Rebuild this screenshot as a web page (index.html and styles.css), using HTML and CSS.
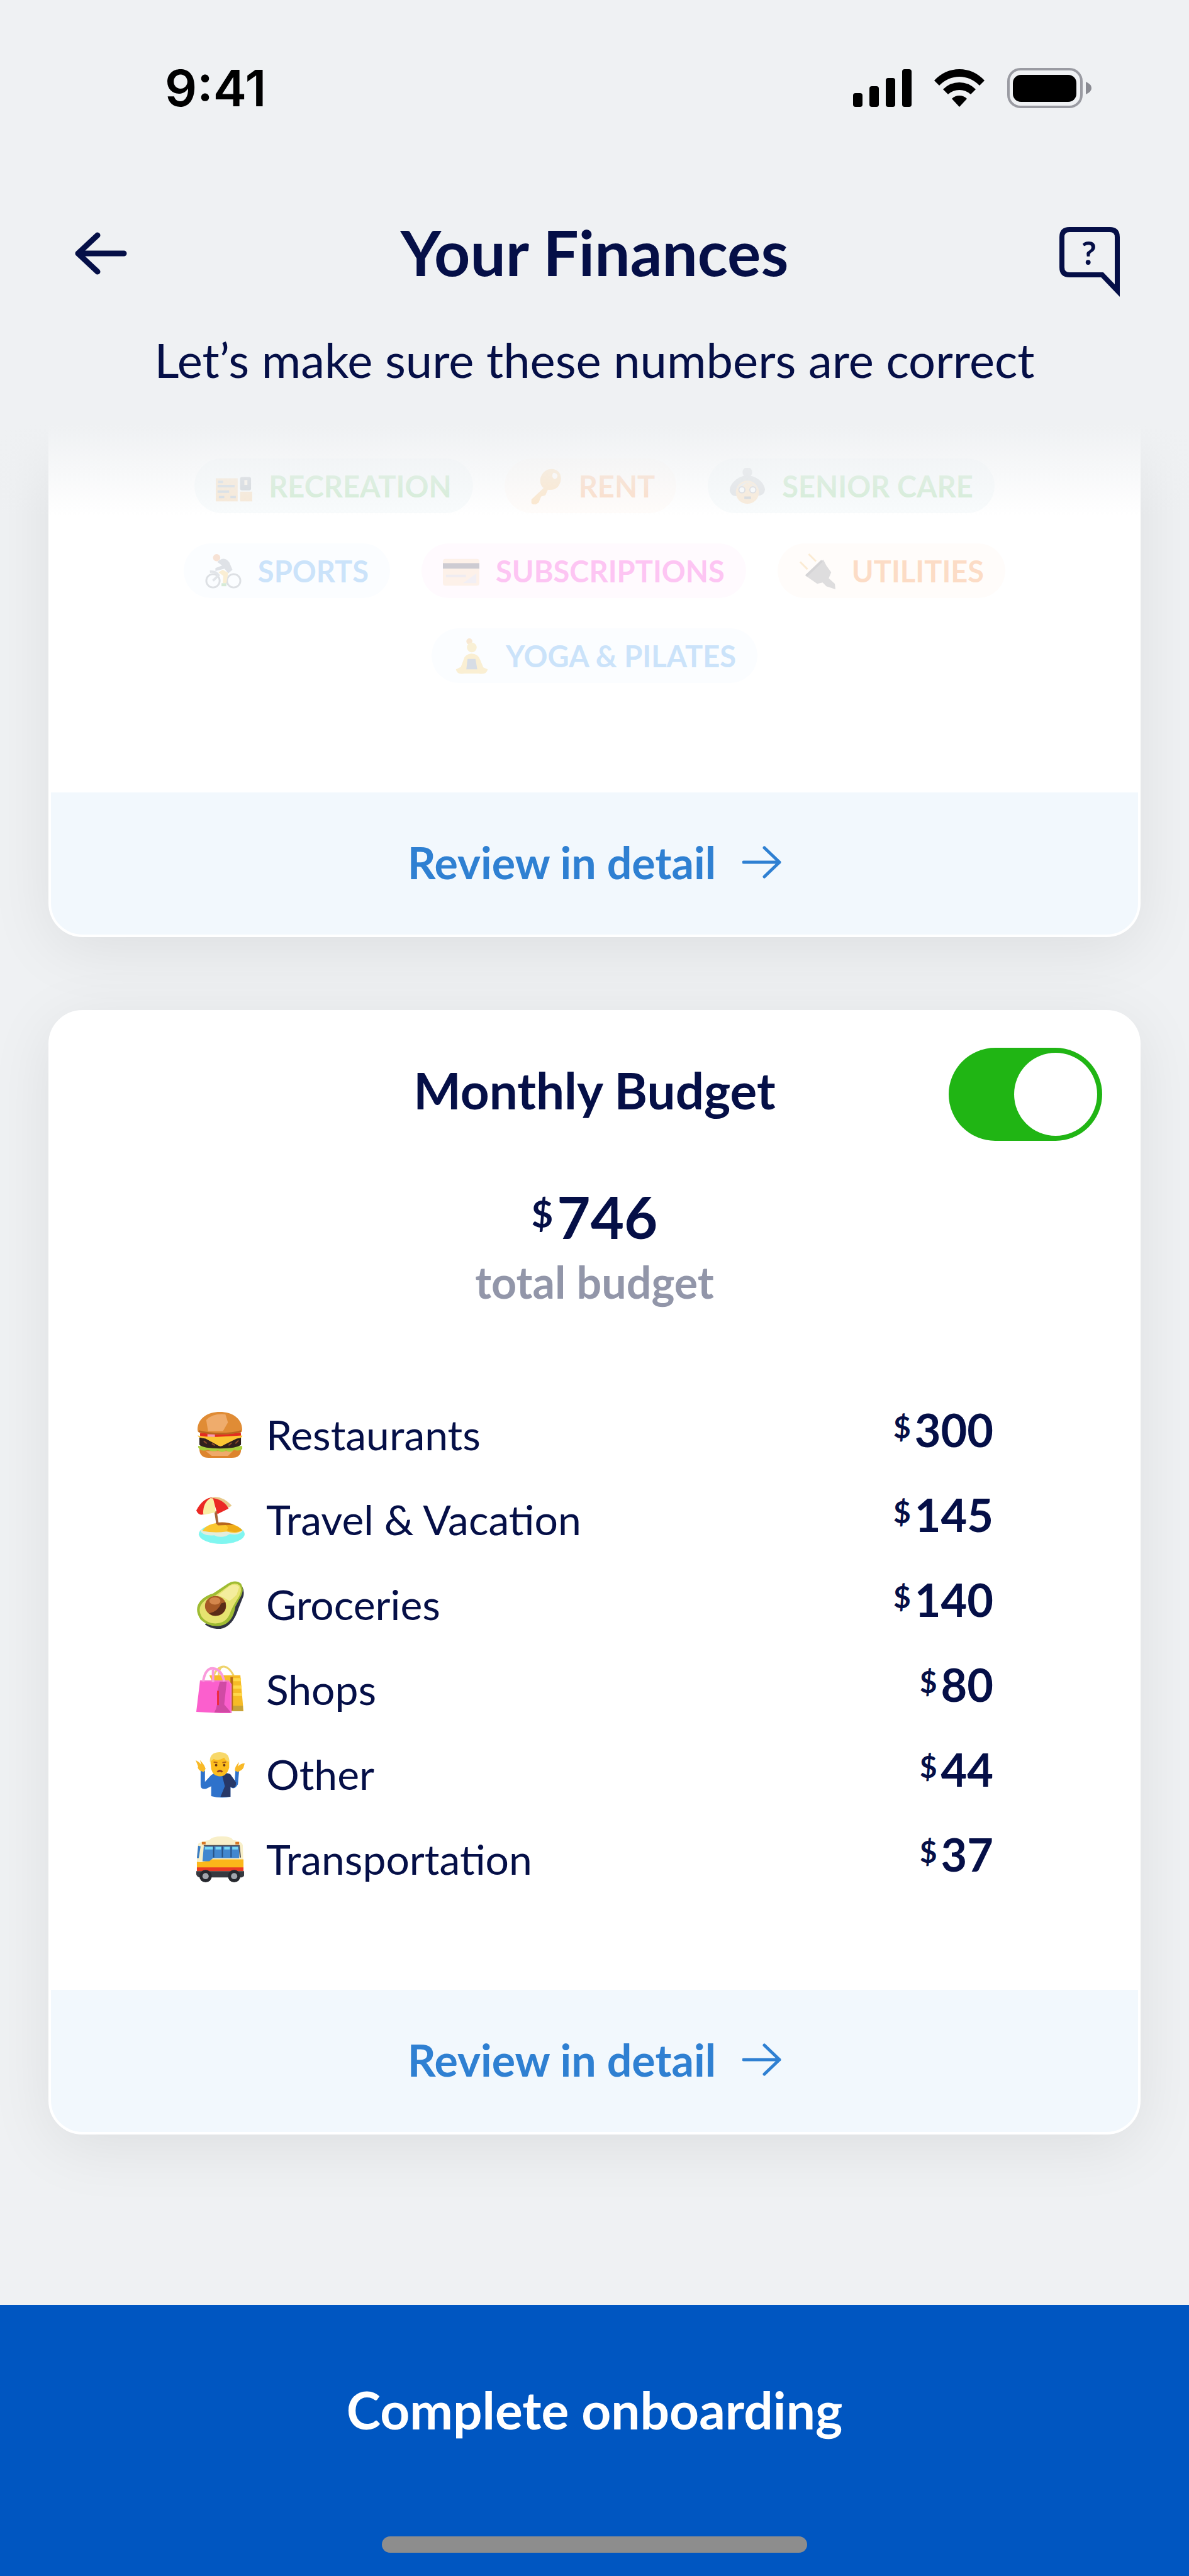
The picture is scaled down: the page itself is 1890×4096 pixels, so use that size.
FILE: index.html
```html
<!DOCTYPE html>
<html lang="en">
<head>
<meta charset="utf-8">
<meta name="viewport" content="width=device-width, initial-scale=1">
<title>Your Finances</title>
<link rel="stylesheet" href="styles.css">
</head>
<body>
<svg class="sprite" aria-hidden="true">
  <symbol id="arrow-right" viewBox="0 0 62 52">
    <path d="M2 26H59M35 3L59 26L35 49" fill="none" stroke="currentColor" stroke-width="5" stroke-linecap="round" stroke-linejoin="round"/>
  </symbol>
</svg>

<header class="top">
  <div class="status">
    <span class="clock">9:41</span>
    <div class="status-icons">
      <svg width="93" height="60" viewBox="0 0 93 60" aria-hidden="true">
        <rect x="0" y="38" width="15" height="22" rx="4"/>
        <rect x="26" y="27" width="15" height="33" rx="4"/>
        <rect x="52" y="14" width="15" height="46" rx="4"/>
        <rect x="78" y="0" width="15" height="60" rx="4"/>
      </svg>
      <svg width="80" height="60" viewBox="0 0 80 60" aria-hidden="true">
        <path d="M0 18Q17 0 40 0T80 18L72 26Q58 12 40 12T8 26Z"/>
        <path d="M14 32Q25 21 40 21T66 32L58 40Q50 33 40 33T22 40Z"/>
        <path d="M28 47Q33 42 40 42T52 47L40 60Z"/>
      </svg>
      <svg width="134" height="64" viewBox="0 0 134 64" aria-hidden="true">
        <rect x="2" y="2" width="116" height="60" rx="19" fill="none" stroke="#9a9ba2" stroke-width="4"/>
        <rect x="9" y="11" width="101" height="43" rx="13"/>
        <path d="M125 22Q134 26 134 32T125 42Z" fill="#8a8b92"/>
      </svg>
    </div>
  </div>
  <div class="nav">
    <button class="icon-button back" type="button" aria-label="Back">
      <svg width="84" height="68" viewBox="0 0 84 68"><path d="M79 34H6M37 5L6 34L37 63" fill="none" stroke="currentColor" stroke-width="9" stroke-linecap="round" stroke-linejoin="round"/></svg>
    </button>
    <h1>Your Finances</h1>
    <button class="icon-button help" type="button" aria-label="Help">
      <svg width="96" height="111" viewBox="0 0 96 111">
        <path d="M16 4H80Q92 4 92 16V101L68 76H16Q4 76 4 64V16Q4 4 16 4Z" fill="none" stroke="currentColor" stroke-width="8"/>
        <text class="help-mark" x="47" y="60" text-anchor="middle">?</text>
      </svg>
    </button>
  </div>
  <p class="subtitle">Let’s make sure these numbers are correct</p>
</header>

<main class="content">
  <section class="card card-categories">
    <ul class="chips">
      <li class="chip green"><svg viewBox="0 0 60 60"><path d="M0 17H36V55H0ZM40 39H60V55H40Z" fill="#f6a94f"/><rect x="40" y="15" width="18" height="22" rx="3" fill="#4b5568"/><path d="M47 20h5v8h-5z" fill="#ffd9a8"/><path d="M4 23H12M3 30H31M3 39H22M5 48H14M24 48H33" stroke="#58708c" stroke-width="4"/></svg>Recreation</li>
      <li class="chip orange"><svg viewBox="0 0 60 60"><path d="M24 16Q30 0 46 2Q60 6 57 22Q53 38 36 36L32 45L25 47L21 57Q14 63 9 58V52L29 33Q22 28 24 16ZM45 8Q41 14 46 18Q51 19 52 13Q51 8 45 8Z" fill="#f5a02f" fill-rule="evenodd"/></svg>Rent</li>
      <li class="chip green"><svg viewBox="0 0 60 60"><circle cx="30" cy="7" r="8" fill="#9298a1"/><path d="M30 12C12 14 0 28 1 38Q4 48 14 46H46Q58 46 59 36C58 24 46 14 30 12Z" fill="#9298a1"/><ellipse cx="30" cy="40" rx="19" ry="19" fill="#fbb15e"/><path d="M12 34Q30 14 48 34Q38 28 30 22Q24 30 12 34Z" fill="#b3b8bf"/><circle cx="21" cy="36" r="5" fill="#fff" stroke="#667" stroke-width="2"/><circle cx="39" cy="36" r="5" fill="#fff" stroke="#667" stroke-width="2"/><path d="M25 49H36" stroke="#59606c" stroke-width="4"/></svg>Senior care</li>
      <li class="chip blue"><svg viewBox="0 0 60 60"><g fill="none" stroke="#767d86" stroke-width="3"><circle cx="13" cy="46" r="11"/><circle cx="47" cy="46" r="11"/></g><circle cx="19" cy="8" r="6" fill="#ea8443"/><path d="M20 15Q32 4 40 16L45 28L38 34L32 26L17 30V25L28 21Z" fill="#7e8794"/><path d="M29 28L38 33L35 50H29L30 38L22 32Z" fill="#f7bd3d"/><path d="M27 50H35V55H27Z" fill="#53a849"/><path d="M8 31Q18 30 22 37L13 46" fill="none" stroke="#8c939d" stroke-width="4"/></svg>Sports</li>
      <li class="chip pink"><svg viewBox="0 0 60 60"><rect y="10" width="60" height="44" rx="4" fill="#f7d6a4"/><rect y="17" width="60" height="9" fill="#20283c"/><path d="M5 36H38V40H5Z" fill="#b9bfc8"/><path d="M33 50L55 34V50Z" fill="#c8cdd4"/></svg>Subscriptions</li>
      <li class="chip orange"><svg viewBox="0 0 60 60"><path d="M2 15L14 27M16 2L28 14" stroke="#f1b34f" stroke-width="3"/><path d="M40 11L45 21L53 32L49 42L59 51L60 60L45 55L39 49L30 51L10 37Z" fill="#6d7380"/><path d="M38 13L12 38" stroke="#454c5b" stroke-width="4"/></svg>Utilities</li>
      <li class="chip blue"><svg viewBox="0 0 60 60"><circle cx="27" cy="6" r="5" fill="#f2a33a"/><circle cx="31" cy="16" r="8" fill="#f6c445"/><path d="M30 26Q42 26 45 37L50 49L57 52Q56 61 42 59H19Q6 61 5 52L13 48L18 35Q20 27 30 26Z" fill="#f7bf3c"/><path d="M24 35H37L40 52H22Z" fill="#5d6f8e"/></svg>Yoga &amp; Pilates</li>
    </ul>
    <a class="review" href="#categories">Review in detail <svg class="arrow"><use href="#arrow-right"/></svg></a>
  </section>

  <section class="card card-budget">
    <div class="budget-head">
      <h2 id="budget-title">Monthly Budget</h2>
      <input class="toggle" type="checkbox" role="switch" aria-labelledby="budget-title" checked>
    </div>
    <p class="total"><sup>$</sup>746</p>
    <p class="total-label">total budget</p>
    <dl class="budget-list">
      <div class="budget-row">
        <dt><svg viewBox="0 0 79 79"><path d="M6 62H73Q74 77 58 77H21Q6 77 6 62Z" fill="#dd842d"/><path d="M16 66H60L52 74H26Z" fill="#efaa6b"/><path d="M4 58H75V63Q68 67 62 64Q56 70 49 65Q42 70 36 65Q26 68 20 64Q8 68 4 60Z" fill="#a9cf3c"/><path d="M6 44H73V56Q66 62 39 62T6 56Z" fill="#30201c"/><path d="M13 50l5 4m8 0l5 3m22 0l5-4m6 1l5-5" stroke="#8b4b2a" stroke-width="2"/><rect x="7" y="35" width="66" height="9" rx="4" fill="#e32d20"/><path d="M19 39h12v5h-12z" fill="#f69ab3"/><path d="M3 41Q20 44 39 43T75 41Q76 45 66 46L46 56Q40 61 34 56L16 46Q4 45 3 41Z" fill="#fcc533"/><path d="M3 32C3 13 20 3 39 3S75 13 75 32Q75 38 66 37Q40 42 12 37Q3 38 3 32Z" fill="#e08c35"/><path d="M17 16Q28 5 48 7L52 20L44 34H20Z" fill="#efac6c"/><path d="M5 34Q20 38 40 38T73 34" fill="none" stroke="#b9651f" stroke-width="3"/></svg>Restaurants</dt>
        <dd><sup>$</sup>300</dd>
      </div>
      <div class="budget-row">
        <dt><svg viewBox="0 0 79 79"><ellipse cx="42" cy="63" rx="37" ry="16" fill="#80f6f0"/><path d="M7 57Q40 50 76 57Q72 66 55 63Q42 71 30 65Q12 67 7 57Z" fill="#e2eddd"/><path d="M11 58Q18 45 42 45T75 57Q66 64 50 59Q30 62 11 58Z" fill="#fbc72f"/><path d="M42 46Q66 46 75 57Q64 63 50 57Q56 50 42 46Z" fill="#efac17"/><path d="M32 45Q48 42 62 48L36 49Z" fill="#b8671d"/><path d="M32 26L35 46" stroke="#a76638" stroke-width="4"/><path d="M1 25Q12 4 28 4L30 26L10 32Q4 32 1 25Z" fill="#eb2924"/><path d="M12 30Q12 12 24 5L30 6L32 28L14 32Z" fill="#f9eea4"/><path d="M25 4Q42 0 58 17Q56 20 50 21L40 12Z" fill="#e7c98b"/><path d="M28 5Q46 8 53 22L35 31Q31 18 28 5Z" fill="#eb2924"/></svg>Travel &amp; Vacation</dt>
        <dd><sup>$</sup>145</dd>
      </div>
      <div class="budget-row">
        <dt><svg viewBox="0 0 79 79"><path d="M66 4Q80 10 77 26L69 46Q60 75 40 79Q26 80 15 72Z" fill="#313442"/><path d="M52 6Q64 -1 73 6Q79 16 72 28L64 43Q60 70 40 74Q22 77 8 64Q-3 48 7 35Q14 26 28 22Z" fill="#9fbc33"/><path d="M54 9Q64 3 71 9Q76 17 68 30Q59 44 56 52Q51 68 36 70Q20 72 10 60Q2 46 12 36Q18 29 32 25Z" fill="#e6e370"/><path d="M55 10Q65 5 70 12L66 24Q58 32 54 34Q44 27 36 25Z" fill="#f4ed9d"/><ellipse cx="32" cy="42" rx="17" ry="16" fill="#a75a26"/><path d="M48 36Q51 52 38 57Q27 60 22 54Q36 51 41 38Z" fill="#5a2c17"/><ellipse cx="31" cy="34" rx="9" ry="6" fill="#d4874c"/></svg>Groceries</dt>
        <dd><sup>$</sup>140</dd>
      </div>
      <div class="budget-row">
        <dt><svg viewBox="0 0 79 79"><path d="M37 17Q38 2 46 3T61 17M29 18Q34 4 44 3" fill="none" stroke="#eed36c" stroke-width="3"/><path d="M22 17H72L77 75H48Z" fill="#f6bb27"/><path d="M60 24H73M60 36H74M60 48H75" stroke="#ffd84a" stroke-width="5"/><path d="M60 66H76V75H58Z" fill="#c7a33a"/><path d="M56 20H60V72L56 77Z" fill="#b76a17"/><path d="M7 26H49L57 30V78H40L1 76Z" fill="#fb5fcd"/><path d="M39 27H50L46 64L57 77H30Q37 66 34 46Z" fill="#d04aa4"/><path d="M7 26H53L57 32V78" fill="none" stroke="#f577cf" stroke-width="2"/><path d="M36 42V65" stroke="#ee2a3f" stroke-width="3"/><path d="M12 27Q16 4 29 6T46 27M28 28V8" fill="none" stroke="#fa9bdc" stroke-width="4"/></svg>Shops</dt>
        <dd><sup>$</sup>80</dd>
      </div>
      <div class="budget-row">
        <dt><svg viewBox="0 0 79 79"><path d="M8 34H15V52L25 41Q32 36 40 38Q50 36 56 40L63 50L64 34H70L68 56Q62 66 56 60V76Q40 79 25 75V59L17 63Q8 65 8 57Z" fill="#2e72cb"/><path d="M43 43Q50 36 56 40L65 53Q65 65 56 60V76H40L47 59Z" fill="#273868"/><path d="M0 17Q6 20 9 24L7 17Q14 24 16 31L13 36L7 34Q2 29 4 27ZM79 22Q73 22 68 27L70 20Q63 27 63 34L68 36Q75 33 77 29Z" fill="#f8b927"/><path d="M24 22Q23 5 39 5T54 22V29Q50 43 39 43T25 31Z" fill="#fbbd1e"/><path d="M23 20Q22 4 39 4Q55 4 54 20Q48 18 46 13Q36 19 29 15Z" fill="#f7d86a"/><path d="M29 20l6 1M43 21l6-1" stroke="#b36518" stroke-width="2"/><circle cx="33" cy="25" r="2" fill="#683615"/><circle cx="46" cy="25" r="2" fill="#683615"/><path d="M35 36Q39 32 43 36" fill="none" stroke="#8e3d20" stroke-width="3"/></svg>Other</dt>
        <dd><sup>$</sup>44</dd>
      </div>
      <div class="budget-row">
        <dt><svg viewBox="0 0 79 79"><path d="M4 15Q10 10 22 9Q26 3 42 3Q58 3 60 9Q75 10 76 18L77 60H2V34Z" fill="#f8efc9"/><path d="M2 44Q12 46 22 40H77V54H2Z" fill="#fbb71a"/><path d="M2 53H77V59H2Z" fill="#e93a24"/><path d="M1 59H78V66Q76 70 70 69H8Q2 69 1 64Z" fill="#363940"/><path d="M13 20Q18 17 30 18H70V38H28L22 43H11Z" fill="#4287cf"/><path d="M15 22H28M32 22H41M46 22H55M59 22H68" stroke="#77d8f4" stroke-width="4"/><path d="M29 19V37M43 19V37M57 19V37" stroke="#264f83" stroke-width="2"/><path d="M4 18L8 19L5 38L2 38Z" fill="#3a7dc5"/><path d="M13 18H70L72 37" fill="none" stroke="#53545a" stroke-width="2"/><path d="M10 12h6v4h-6zM64 12h6v4h-6z" fill="#d77724"/><circle cx="16" cy="67" r="10" fill="#26282e"/><circle cx="62" cy="67" r="10" fill="#26282e"/><circle cx="16" cy="67" r="5" fill="#a1a5ac"/><circle cx="62" cy="67" r="5" fill="#a1a5ac"/></svg>Transportation</dt>
        <dd><sup>$</sup>37</dd>
      </div>
    </dl>
    <a class="review" href="#budget">Review in detail <svg class="arrow"><use href="#arrow-right"/></svg></a>
  </section>
</main>

<footer class="bottom">
  <button class="complete" type="button">Complete onboarding</button>
  <div class="home-indicator"></div>
</footer>
</body>
</html>
```
FILE: styles.css
```css
* {
  box-sizing: border-box;
}

:root {
  --page: #eff1f3;
  --navy: #050f47;
  --link: #2f80d2;
}

body {
  margin: 0;
  min-height: 100vh;
  display: flex;
  flex-direction: column;
  background: var(--page);
  color: var(--navy);
  font-family: Lato, "Liberation Sans", sans-serif;
}

h1, h2, p, ul, dl, dd {
  margin: 0;
  padding: 0;
}

sup {
  line-height: 1;
  vertical-align: baseline;
}

.sprite {
  display: none;
}

/* Header */

.top {
  position: relative;
  z-index: 2;
  padding: 90px 0 28px;
  background: var(--page);
}

.status {
  display: flex;
  justify-content: space-between;
  align-items: center;
  height: 100px;
  padding: 0 155px 0 262px;
  color: #000;
}

.clock {
  font: 600 80px/100px Inter, sans-serif;
}

.status-icons {
  display: flex;
  align-items: center;
  gap: 36px;
}

.nav {
  display: grid;
  grid-template-columns: 1fr auto 1fr;
  align-items: start;
  margin-top: 171px;
  padding: 0 110px;
}

.icon-button {
  display: flex;
  align-items: center;
  padding: 0;
  border: 0;
  background: none;
  color: var(--navy);
}

.back {
  justify-self: start;
  height: 84px;
  padding-left: 8px;
}

.help {
  justify-self: end;
}

.help-mark {
  fill: currentColor;
  font: 700 52px Lato, sans-serif;
}

h1 {
  font-size: 100px;
  font-weight: 700;
  line-height: 78px;
}

.subtitle {
  margin-top: 60px;
  font-size: 76px;
  line-height: 80px;
  text-align: center;
}

/* Cards */

.content {
  position: relative;
  display: flex;
  flex-direction: column;
  gap: 116px;
  padding: 0 77px 271px;
}

/* Scrolled content fades out under the header */
.content::before {
  content: "";
  position: absolute;
  inset: 0 0 auto;
  height: 180px;
  background: linear-gradient(var(--page) 20%, rgba(239, 241, 243, 0));
  z-index: 1;
}

.card {
  display: flex;
  flex-direction: column;
  border: 4px solid #fff;
  border-radius: 54px;
  background: #fff;
  box-shadow: 0 20px 100px rgba(0, 0, 0, 0.08);
}

.card-categories {
  border-top: 0;
  border-top-left-radius: 0;
  border-top-right-radius: 0;
}

.review {
  display: flex;
  justify-content: center;
  align-items: center;
  gap: 42px;
  height: 226px;
  padding-bottom: 4px;
  border-radius: 0 0 50px 50px;
  background: #f2f8fd;
  color: var(--link);
  font-size: 70px;
  font-weight: 700;
  line-height: 80px;
  text-decoration: none;
}

.arrow {
  width: 62px;
  height: 52px;
}

/* Category chips */

.chips {
  display: flex;
  flex-wrap: wrap;
  justify-content: center;
  gap: 48px 50px;
  padding: 89px 190px 174px;
  list-style: none;
}

.chip {
  display: flex;
  align-items: center;
  gap: 26px;
  height: 87px;
  padding: 0 34px;
  border-radius: 44px;
  font-size: 47px;
  font-weight: 700;
  line-height: 60px;
  text-transform: uppercase;
}

.chip svg {
  width: 58px;
  height: 58px;
  opacity: 0.22;
}

.green {
  background: #f8fbfc;
  color: #d2ecd5;
}

.orange {
  background: #fffcfa;
  color: #fcdcc6;
}

.blue {
  background: #fbfdff;
  color: #cbe3fa;
}

.pink {
  background: #fffafe;
  color: #fdc5f3;
}

/* Monthly budget */

.budget-head {
  display: grid;
  grid-template-columns: 1fr auto 1fr;
  align-items: start;
  padding: 56px 57px 0;
}

h2 {
  grid-column: 2;
  font-size: 80px;
  font-weight: 700;
  line-height: 134px;
}

.toggle {
  appearance: none;
  justify-self: end;
  display: flex;
  justify-content: flex-end;
  width: 244px;
  height: 148px;
  margin: 0;
  padding: 8px;
  border-radius: 74px;
  background: #20b514;
}

.toggle::before {
  content: "";
  width: 132px;
  height: 132px;
  border-radius: 50%;
  background: #fff;
}

.toggle:not(:checked) {
  justify-content: flex-start;
  background: #c4c8d0;
}

.total {
  display: flex;
  justify-content: center;
  gap: 6px;
  margin-top: 71px;
  font-size: 92px;
  font-weight: 700;
  line-height: 100px;
}

.total sup {
  font-size: 60px;
  line-height: 88px;
}

.total-label {
  margin-top: 13px;
  color: #9296a9;
  font-size: 70px;
  font-weight: 700;
  line-height: 80px;
  text-align: center;
}

.budget-list {
  padding: 135px 230px 141px;
}

.budget-row {
  display: flex;
  justify-content: space-between;
  height: 135px;
}

.budget-row dt {
  display: flex;
  align-items: center;
  gap: 34px;
  font-size: 66px;
}

.budget-row dt svg {
  width: 78px;
  height: 78px;
}

.budget-row dd {
  display: flex;
  gap: 6px;
  font-size: 72px;
  font-weight: 700;
  line-height: 120px;
}

.budget-row sup {
  font-size: 48px;
  line-height: 112px;
}

/* Bottom bar */

.bottom {
  display: flex;
  flex-direction: column;
  align-items: center;
  justify-content: space-between;
  flex: 1;
  min-height: 431px;
  padding: 106px 0 37px;
  background: #0056c1;
}

.complete {
  padding: 10px 40px;
  border: 0;
  background: none;
  color: #fff;
  font: 700 82px/100px Lato, sans-serif;
}

.home-indicator {
  width: 676px;
  height: 26px;
  border-radius: 13px;
  background: #8d8d8d;
}
```
